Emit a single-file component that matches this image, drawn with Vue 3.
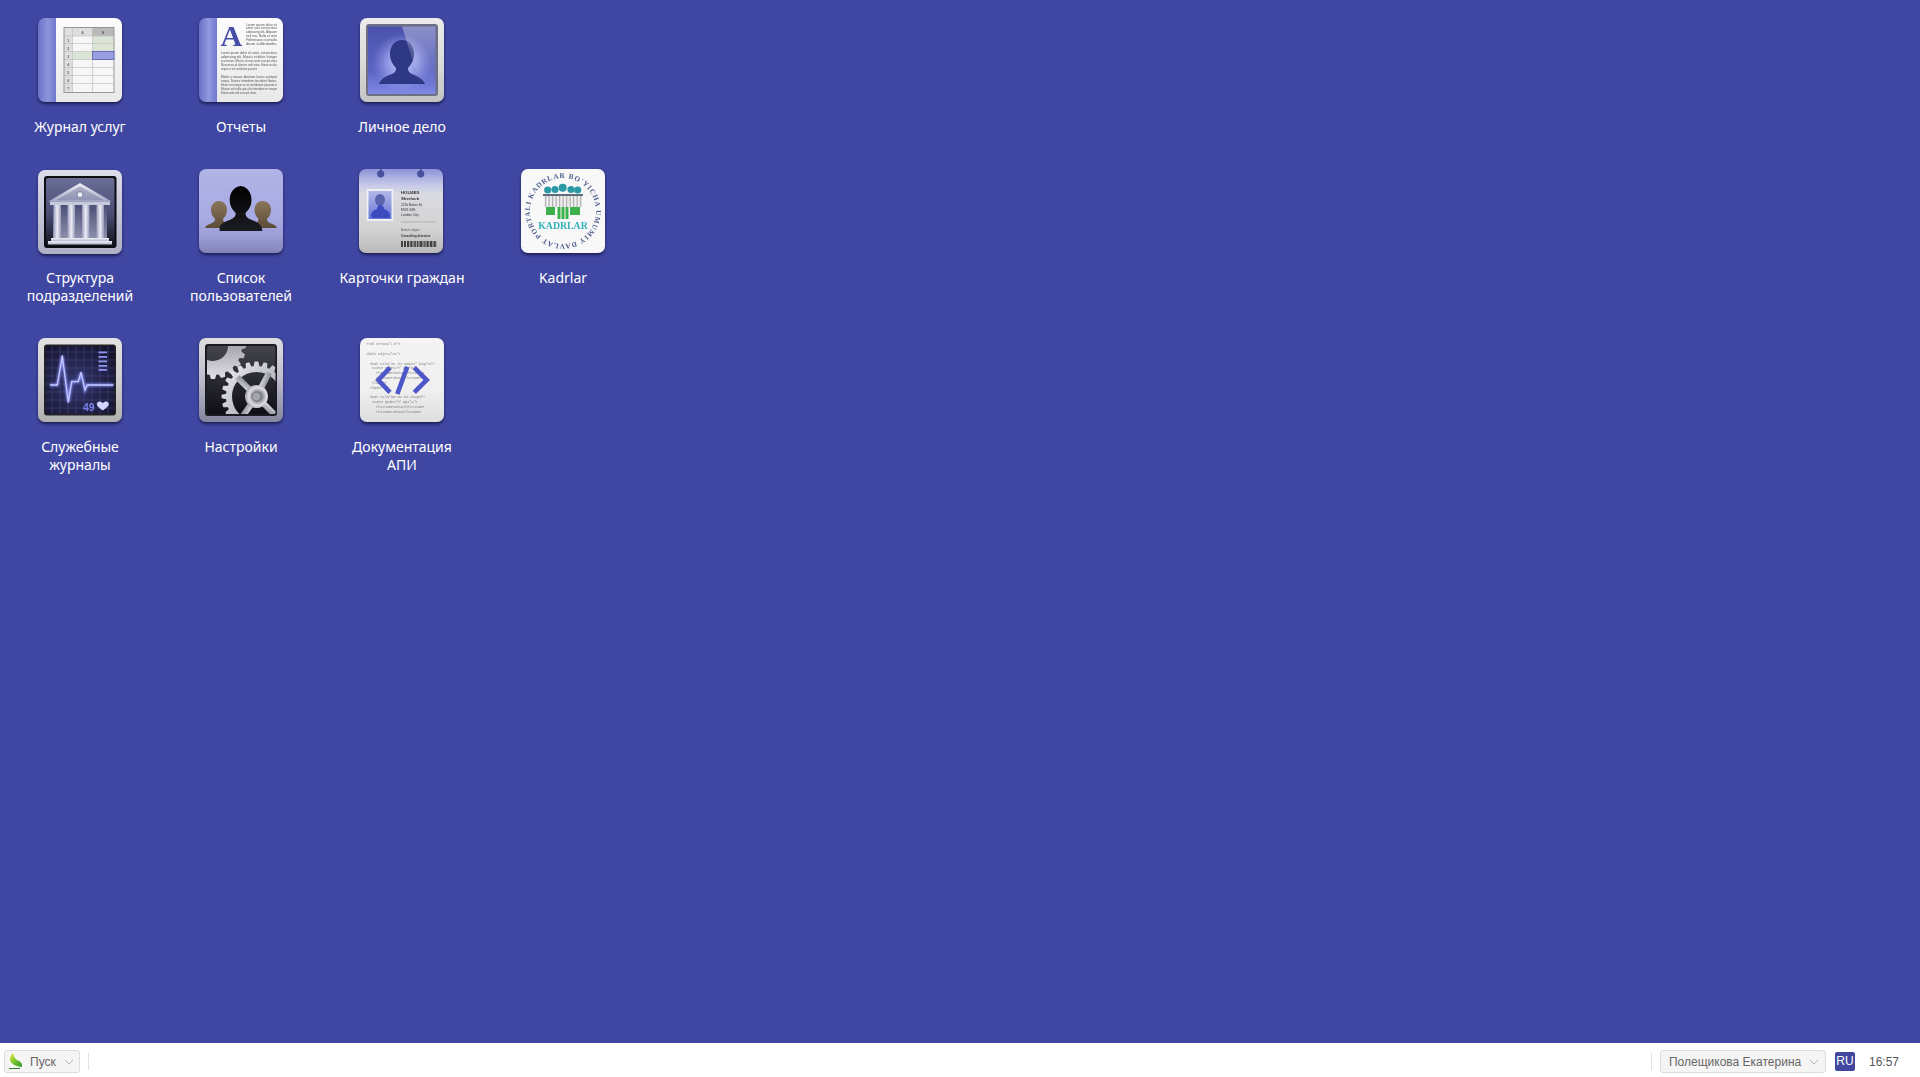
<script setup>
const rows = [
  [
    { icon: 'journal', label: 'Журнал услуг' },
    { icon: 'reports', label: 'Отчеты' },
    { icon: 'person', label: 'Личное дело' },
  ],
  [
    { icon: 'temple', label: 'Структура\nподразделений' },
    { icon: 'users', label: 'Список\nпользователей' },
    { icon: 'card', label: 'Карточки граждан' },
    { icon: 'kadrlar', label: 'Kadrlar' },
  ],
  [
    { icon: 'monitor', label: 'Служебные\nжурналы' },
    { icon: 'gears', label: 'Настройки' },
    { icon: 'api', label: 'Документация\nАПИ' },
  ],
]

const gridYs = [18, 25.5, 33.5, 41.5, 49.5, 57.5, 65.5]

const topLines = [
  ['Lorem ipsum dolor sit', 7.5], ['amet, vice consectetur', 11.4], ['adipiscing elit. Aliquam', 15.3],
  ['sed nisi. Nulla et ante', 19.2], ['Pellentesque ut convallis', 23.1], ['diam sollicitudin.', 27],
]
const bodyLines = [
  ['Lorem ipsum dolor sit amet, consectetur', 36], ['adipiscing elit. Mauris et dolor. Integer', 40.1],
  ['accumsan. Mauris sit eros ante suscipit vitae', 44.2], ['Maecenas id ultricies velit vitae. Etiam iaculis', 48.3],
  ['neque ac vel vestibulum posuere', 52.4],
  ['Morbi a mauris. Aenean luctus volutpat', 60], ['turpis. Donec interdum tincidunt libero.', 64.1],
  ['Etiam non neque ac mi vestibulum placerat in', 68.2], ['Mauris vel nulla quis dui interdum et neque', 72.3],
  ['Etiam ante elit suscipit vitae.', 76.4],
]
const codeLines = [
  ['<?xml version="1.0"?>', 7, 7.5], ['<bible subject="XML">', 16.5, 7.5],
  ['<book title="XML for newbies" lang="en">', 26.5, 11], ['<author gender="M" age="32">', 31, 13],
  ['<firstname>Michael</firstname>', 36, 17], ['<lastname>Johnson</lastname>', 41, 17],
  ['</author>', 45.5, 13], ['</book>', 50.5, 11],
  ['<book title="How XML has changed">', 60, 11], ['<author gender="M" age="41">', 64.5, 13],
  ['<firstname>Michael</firstname>', 69.5, 17], ['<lastname>Johnson</lastname>', 74.5, 17],
]

const barcode = [0, 1.2, 3, 4, 6.2, 7.2, 8.8, 10, 11.6, 13.4, 14.4, 16, 17.6, 19, 20, 21.6, 23.4, 24.6, 26, 27.4, 29, 30.2, 31.6, 33.2, 34.4]

const teal = [[26.7, 21, 3.6], [34, 20.5, 3.6], [41.7, 18.7, 4], [50, 20.5, 3.6], [56.7, 21, 3.6]]
const stripes = [24, 27.5, 31, 34.5, 38, 41.5, 45, 48.5, 52, 55.5, 59]
const greens = [[25, 9, 46], [36.5, 3, 50], [40.5, 3, 50], [44.5, 3, 50], [49, 10, 46]]

const grid = [14, 22, 30, 38, 46, 54, 62, 70]

function gear(cx, cy, R, r, teeth) {
  const step = (Math.PI * 2) / teeth
  const pts = []
  for (let i = 0; i < teeth; i++) {
    const a = i * step
    const p = (rad, ang) => (cx + rad * Math.cos(ang)).toFixed(2) + ' ' + (cy + rad * Math.sin(ang)).toFixed(2)
    pts.push(p(r, a - step * 0.36), p(R, a - step * 0.2), p(R, a + step * 0.2), p(r, a + step * 0.36))
  }
  return 'M' + pts.join('L') + 'Z'
}
function ring(cx, cy, R, r, teeth, hole) {
  const c = 'M' + (cx - hole) + ' ' + cy + 'a' + hole + ' ' + hole + ' 0 1 0 ' + hole * 2 + ' 0a' + hole + ' ' + hole + ' 0 1 0 ' + -hole * 2 + ' 0Z'
  return gear(cx, cy, R, r, teeth) + c
}
const bigGear = ring(57.5, 58.5, 35, 30.5, 24, 24.5)
const smallGear = ring(14, 8, 33, 29, 20, 15)
const spokes = [-135, -62, 45, 125]
</script>

<template>
  <div class="desktop">
    <main class="icons">
      <div v-for="(row, r) in rows" :key="r" class="row">
        <div v-for="it in row" :key="it.icon" class="item">
          <div class="tile" :class="'tile-' + it.icon">
            <svg v-if="it.icon === 'journal'" viewBox="0 0 84 84" class="art">
              <defs>
                <linearGradient id="j-page" x1="0" y1="0" x2="0" y2="1"><stop offset="0" stop-color="#fcfcfc" /><stop offset="1" stop-color="#e9e9e9" /></linearGradient>
                <linearGradient id="j-band" x1="0" y1="0" x2="1" y2="0"><stop offset="0" stop-color="#6a72c8" /><stop offset=".55" stop-color="#8d94da" /><stop offset="1" stop-color="#7078cf" /></linearGradient>
              </defs>
              <rect width="84" height="84" fill="url(#j-page)" />
              <rect width="18" height="84" fill="url(#j-band)" />
              <rect x="26" y="9.5" width="50" height="65" fill="#f6f6f6" />
              <rect x="26" y="9.5" width="50" height="8.5" fill="#dedede" />
              <rect x="26" y="9.5" width="8.5" height="65" fill="#dedede" />
              <rect x="54.5" y="9.5" width="21.5" height="8.5" fill="#b9b9b9" />
              <rect x="54.5" y="18" width="21.5" height="15.5" fill="#dbe4d5" />
              <rect x="34.5" y="33.5" width="20" height="8" fill="#dbe4d5" />
              <g stroke="#bcbcbc" stroke-width=".6">
                <line v-for="y in gridYs" :key="y" x1="26" x2="76" :y1="y" :y2="y" />
                <line x1="34.5" x2="34.5" y1="9.5" y2="74.5" />
                <line x1="54.5" x2="54.5" y1="9.5" y2="74.5" />
              </g>
              <rect x="26" y="9.5" width="50" height="65" fill="none" stroke="#8f8f8f" stroke-width=".9" />
              <rect x="54.5" y="33.5" width="21.5" height="8" fill="#98a0e2" stroke="#4a52b0" stroke-width=".7" />
              <g class="sheet" font-size="3.6" font-weight="700" fill="#666" text-anchor="middle">
                <text x="44.5" y="15.500">A</text><text x="65" y="15.500">B</text>
                <text v-for="n in 7" :key="n" x="30.2" :y="15.800 + n * 8">{{ n }}</text>
              </g>
            </svg>

            <svg v-else-if="it.icon === 'reports'" viewBox="0 0 84 84" class="art">
              <defs>
                <linearGradient id="r-page" x1="0" y1="0" x2="0" y2="1"><stop offset="0" stop-color="#fcfcfc" /><stop offset="1" stop-color="#e8e8e8" /></linearGradient>
                <linearGradient id="r-band" x1="0" y1="0" x2="1" y2="0"><stop offset="0" stop-color="#6a72c8" /><stop offset=".55" stop-color="#9299de" /><stop offset="1" stop-color="#7078cf" /></linearGradient>
              </defs>
              <rect width="84" height="84" fill="url(#r-page)" />
              <rect width="18" height="84" fill="url(#r-band)" />
              <text x="21.500" y="28" class="serif" font-size="30" fill="#454da6">A</text>
              <g class="sheet" font-size="2.700" fill="#555">
                <text v-for="l in topLines" :key="l[1]" x="47" :y="l[1]" textLength="31" lengthAdjust="spacingAndGlyphs">{{ l[0] }}</text>
                <text v-for="l in bodyLines" :key="l[1]" x="22" :y="l[1]" :textLength="l[0].length < 32 ? 36 : 56" lengthAdjust="spacingAndGlyphs">{{ l[0] }}</text>
              </g>
            </svg>

            <svg v-else-if="it.icon === 'person'" viewBox="0 0 84 84" class="art">
              <defs>
                <linearGradient id="p-frame" x1="0" y1="0" x2="0" y2="1"><stop offset="0" stop-color="#ebebeb" /><stop offset=".5" stop-color="#dcdcdc" /><stop offset="1" stop-color="#c4c4c4" /></linearGradient>
                <linearGradient id="p-screen" x1="0" y1="0" x2="0" y2="1"><stop offset="0" stop-color="#4b52ac" /><stop offset=".65" stop-color="#5c64c2" /><stop offset="1" stop-color="#7f89e6" /></linearGradient>
                <radialGradient id="p-halo" cx=".5" cy=".5" r=".5"><stop offset="0" stop-color="#d6daff" stop-opacity=".95" /><stop offset=".55" stop-color="#aab1f6" stop-opacity=".6" /><stop offset="1" stop-color="#8a92e6" stop-opacity="0" /></radialGradient>
                <linearGradient id="p-glare" x1="0" y1="0" x2="0" y2="1"><stop offset="0" stop-color="#fff" stop-opacity=".36" /><stop offset=".45" stop-color="#fff" stop-opacity=".16" /><stop offset=".9" stop-color="#fff" stop-opacity="0" /></linearGradient>
              </defs>
              <rect width="84" height="84" fill="url(#p-frame)" />
              <rect x="6" y="6" width="72" height="72" rx="3" fill="#6d6f84" />
              <rect x="8" y="8.500" width="67.500" height="67.500" fill="url(#p-screen)" />
              <ellipse cx="42" cy="45" rx="30" ry="30" fill="url(#p-halo)" />
              <path d="M42 22c-7 0-12 6-12 14 0 6 3 11 6 14 0 3-1 5-4 6-5 2-11 4-13 10h46c-2-6-9-8-13-10-3-1-4-3-4-6 3-3 6-8 6-14 0-8-5-14-12-14Z" fill="#2f3884" />
              <path d="M42 8.500H75.500V72H62Z" fill="url(#p-glare)" />
            </svg>

            <svg v-else-if="it.icon === 'temple'" viewBox="0 0 84 84" class="art">
              <defs>
                <linearGradient id="t-frame" x1="0" y1="0" x2="0" y2="1"><stop offset="0" stop-color="#dcdcea" /><stop offset="1" stop-color="#aeb0c6" /></linearGradient>
                <linearGradient id="t-screen" x1="0" y1="0" x2="0" y2="1"><stop offset="0" stop-color="#6a6e96" /><stop offset=".55" stop-color="#484b72" /><stop offset="1" stop-color="#14141e" /></linearGradient>
                <linearGradient id="t-roof" x1="0" y1="0" x2="0" y2="1"><stop offset="0" stop-color="#f0f0f6" /><stop offset="1" stop-color="#a6a8c6" /></linearGradient>
                <linearGradient id="t-col" x1="0" y1="0" x2="1" y2="0"><stop offset="0" stop-color="#9a9cbc" /><stop offset=".5" stop-color="#eeeef6" /><stop offset="1" stop-color="#9698b8" /></linearGradient>
                <linearGradient id="t-back" x1="0" y1="0" x2="0" y2="1"><stop offset="0" stop-color="#4d5076" /><stop offset="1" stop-color="#8c8eac" /></linearGradient>
                <linearGradient id="t-base" x1="0" y1="0" x2="0" y2="1"><stop offset="0" stop-color="#f2f2f8" /><stop offset="1" stop-color="#b4b6cc" /></linearGradient>
              </defs>
              <rect width="84" height="84" fill="url(#t-frame)" />
              <rect x="6" y="6" width="72.500" height="72" rx="3" fill="#0c0c12" />
              <rect x="8" y="8" width="68.500" height="68" rx="2" fill="url(#t-screen)" />
              <path d="M42 13 73.700 31.500H10.300Z" fill="url(#t-roof)" />
              <path d="M42 16.500 66 30.300H18Z" fill="#7f82a8" opacity=".55" />
              <circle cx="42" cy="24.700" r="3" fill="#eeeef6" stroke="#6d7096" stroke-width=".8" />
              <rect x="12" y="31.500" width="60" height="3.500" fill="#c6c8dc" />
              <rect x="15" y="35" width="54" height="33" fill="url(#t-back)" />
              <rect v-for="x in [15.500, 29.500, 44, 58.500]" :key="x" :x="x" y="35" width="7.500" height="33" fill="url(#t-col)" />
              <rect x="13" y="68" width="58" height="3" fill="url(#t-base)" />
              <rect x="10" y="71" width="64" height="3.500" fill="url(#t-base)" />
            </svg>

            <svg v-else-if="it.icon === 'users'" viewBox="0 0 84 84" class="art">
              <defs>
                <linearGradient id="u-bg" x1="0" y1="0" x2="0" y2="1"><stop offset="0" stop-color="#b1b4e6" /><stop offset=".62" stop-color="#a7aae2" /><stop offset=".78" stop-color="#9da0d8" /><stop offset="1" stop-color="#8385b8" /></linearGradient>
                <linearGradient id="u-side" x1="0" y1="0" x2="0" y2="1"><stop offset="0" stop-color="#8a765a" /><stop offset="1" stop-color="#5c4c36" /></linearGradient>
                <linearGradient id="u-main" x1="0" y1="0" x2="0" y2="1"><stop offset="0" stop-color="#000" /><stop offset="1" stop-color="#1c1c24" /></linearGradient>
              </defs>
              <rect width="84" height="84" fill="url(#u-bg)" />
              <path d="M20 32c-5 0-8 4-8 9 0 4 2 7 4 9 0 2-1 3-3 4-2 1-6 2-7 5h28c-1-3-5-4-7-5-2-1-3-2-3-4 2-2 4-5 4-9 0-5-3-9-8-9Z" fill="url(#u-side)" />
              <path d="M63.500 32c-5 0-8 4-8 9 0 4 2 7 4 9 0 2-1 3-3 4-2 1-6 2-7 5h28.500c-1-3-5-4-7-5-2-1-3-2-3-4 2-2 4-5 4-9 0-5-3-9-8.500-9Z" fill="url(#u-side)" />
              <path d="M42.700 17c-7 0-12 6-12 14 0 6 3 10 6 13 0 3-1 4-4 6-4 2-10 3-12 8l-.2 4h43l-1-4c-2-5-8-6-12-8-3-2-4-3-4-6 3-3 6-7 6-13 0-8-5-14-11.800-14Z" fill="url(#u-main)" />
            </svg>

            <svg v-else-if="it.icon === 'card'" viewBox="0 0 84 84" class="art">
              <defs>
                <linearGradient id="c-bg" x1="0" y1="0" x2="0" y2="1"><stop offset="0" stop-color="#8c93d8" /><stop offset=".2" stop-color="#c8cbe8" /><stop offset=".3" stop-color="#dadae2" /><stop offset=".7" stop-color="#d4d4d4" /><stop offset="1" stop-color="#b9b9b9" /></linearGradient>
                <linearGradient id="c-photo" x1="0" y1="0" x2="0" y2="1"><stop offset="0" stop-color="#b4b9e8" /><stop offset="1" stop-color="#6a76d8" /></linearGradient>
              </defs>
              <rect width="84" height="84" fill="url(#c-bg)" />
              <rect x="21" y="0" width="1.400" height="3" fill="#43488f" />
              <rect x="61" y="0" width="1.400" height="3" fill="#43488f" />
              <circle cx="21.700" cy="4.800" r="3.600" fill="#4a4f9c" />
              <circle cx="61.700" cy="4.800" r="3.600" fill="#4a4f9c" />
              <rect x="7.700" y="20" width="26.500" height="32" fill="#f0f0f2" />
              <rect x="9.500" y="22" width="23" height="28" fill="url(#c-photo)" />
              <ellipse cx="21" cy="31" rx="5" ry="6" fill="#5a64ae" />
              <path d="M21 36c-2 0-3 2-3 4-3 1-6 3-6 7l1 2h17l1-2c0-4-3-6-6-7 0-2-1-4-4-4Z" fill="#3c4cc0" />
              <g class="sheet" fill="#333">
                <text x="42" y="24.500" font-size="4.300" font-weight="700">HOLMES</text>
                <text x="42" y="30.500" font-size="4.300" font-weight="700">Sherlock</text>
                <text x="42" y="37" font-size="3.300">221b Baker St.</text>
                <text x="42" y="41.500" font-size="3.300">NW1 6XE</text>
                <text x="42" y="46.500" font-size="3.300">London City</text>
                <text x="42" y="62" font-size="3" fill="#555">British subject</text>
                <text x="42" y="68" font-size="3" font-weight="700">Consulting detective</text>
              </g>
              <rect x="42" y="52.500" width="35" height=".8" fill="#aaa" />
              <rect v-for="x in barcode" :key="x" :x="42 + x" y="72" width=".8" height="6" fill="#222" />
            </svg>

            <svg v-else-if="it.icon === 'kadrlar'" viewBox="0 0 84 84" class="art">
              <defs>
                <path id="k-circle" d="M9 42A33 33 0 1 1 75 42A33 33 0 1 1 9 42" />
              </defs>
              <rect width="84" height="84" fill="#f8f8f8" />
              <g transform="rotate(21 42 42)">
                <text class="serif" font-size="7.200" fill="#50608e" letter-spacing=".85">
                  <textPath href="#k-circle">KADRLAR BO'YICHA UMUMIY DAVLAT PORTALI</textPath>
                </text>
              </g>
              <circle v-for="t in teal" :key="t[0]" :cx="t[0]" :cy="t[1]" :r="t[2]" fill="#2c9aa6" />
              <rect x="22" y="25" width="40" height="2" fill="#5d6d7d" />
              <rect x="23" y="27" width="38" height="11" fill="#ececec" />
              <rect v-for="x in stripes" :key="x" :x="x" y="27" width="1.200" height="11" fill="#b4b4b4" />
              <rect v-for="g in greens" :key="g[0]" :x="g[0]" y="38" :width="g[1]" :height="g[2] - 38" fill="#3cb04a" />
              <text x="42" y="60" class="serif" font-size="9.800" fill="#34b0b8" text-anchor="middle">KADRLAR</text>
            </svg>

            <svg v-else-if="it.icon === 'monitor'" viewBox="0 0 84 84" class="art">
              <defs>
                <linearGradient id="m-frame" x1="0" y1="0" x2="0" y2="1"><stop offset="0" stop-color="#e2e2e2" /><stop offset=".5" stop-color="#cfcfcf" /><stop offset="1" stop-color="#b0b0b0" /></linearGradient>
                <radialGradient id="m-screen" cx=".45" cy=".55" r=".7"><stop offset="0" stop-color="#34366e" /><stop offset="1" stop-color="#14142c" /></radialGradient>
                <filter id="m-glow" x="-20%" y="-20%" width="140%" height="140%"><feGaussianBlur stdDeviation="1.200" /></filter>
              </defs>
              <rect width="84" height="84" fill="url(#m-frame)" />
              <rect x="6" y="6.500" width="72" height="71" rx="3" fill="#222" />
              <rect x="7.500" y="8" width="69" height="68" rx="2" fill="url(#m-screen)" />
              <g stroke="#43457f" stroke-width=".6">
                <line v-for="g in grid" :key="g" :x1="g" :x2="g" y1="8" y2="76" />
                <line v-for="g in grid" :key="'h' + g" x1="7.500" x2="76.500" :y1="g" :y2="g" />
              </g>
              <polyline points="12,47 19.300,47 24.300,17.700 30.300,64.300 33.700,43.700 40.300,43.700 43,34.300 47,52 49.300,47 75.300,47" fill="none" stroke="#8088f0" stroke-width="2.800" filter="url(#m-glow)" />
              <polyline points="12,47 19.300,47 24.300,17.700 30.300,64.300 33.700,43.700 40.300,43.700 43,34.300 47,52 49.300,47 75.300,47" fill="none" stroke="#c4c8ff" stroke-width="1.300" />
              <rect v-for="y in [13.500, 18, 22.500, 27, 31]" :key="y" x="60.500" :y="y" width="8.500" height="1.800" fill="#8f95f0" />
              <text x="45" y="72.500" class="sheet" font-size="10.500" font-weight="700" fill="#7b82ea">49</text>
              <path d="M64.800 72.500c-5-3.500-6-5-6-6.500 0-2.800 4-3.500 6-.8 2-2.700 6-2 6 .8 0 1.500-1 3-6 6.500Z" fill="#d2d5ff" />
            </svg>

            <svg v-else-if="it.icon === 'gears'" viewBox="0 0 84 84" class="art">
              <defs>
                <linearGradient id="g-frame" x1="0" y1="0" x2="0" y2="1"><stop offset="0" stop-color="#dededf" /><stop offset=".5" stop-color="#bcbccc" /><stop offset="1" stop-color="#84849e" /></linearGradient>
                <linearGradient id="g-screen" x1="0" y1="0" x2="0" y2="1"><stop offset="0" stop-color="#44444e" /><stop offset="1" stop-color="#0e0e14" /></linearGradient>
                <linearGradient id="g-metal" x1="0" y1="0" x2="1" y2="1"><stop offset="0" stop-color="#f0f0f4" /><stop offset=".55" stop-color="#b4b4be" /><stop offset="1" stop-color="#8a8a96" /></linearGradient>
                <linearGradient id="g-metal2" x1="0" y1="0" x2="0" y2="1"><stop offset="0" stop-color="#6c6c74" /><stop offset="1" stop-color="#e0e0e6" /></linearGradient>
                <radialGradient id="g-hub" cx=".55" cy=".5" r=".6"><stop offset="0" stop-color="#c4c4cc" /><stop offset=".3" stop-color="#808088" /><stop offset=".65" stop-color="#dedee4" /><stop offset="1" stop-color="#8a8a92" /></radialGradient>
                <clipPath id="g-clip"><rect x="8" y="8" width="68.500" height="68" rx="2" /></clipPath>
              </defs>
              <rect width="84" height="84" fill="url(#g-frame)" />
              <rect x="6" y="6" width="72" height="72" rx="3" fill="#1a1a20" />
              <g clip-path="url(#g-clip)">
                <rect x="8" y="8" width="68.500" height="68" fill="url(#g-screen)" />
                <path :d="smallGear" fill="url(#g-metal2)" fill-rule="evenodd" />
                <path :d="bigGear" fill="url(#g-metal)" fill-rule="evenodd" />
                <g fill="url(#g-metal)">
                  <rect v-for="a in spokes" :key="a" x="57.500" y="55.500" width="27" height="6" :transform="'rotate(' + a + ' 57.500 58.500)'" />
                </g>
                <circle cx="57.500" cy="58.500" r="11.500" fill="url(#g-hub)" />
                <circle cx="57.500" cy="58.500" r="4.500" fill="#a4a4ac" stroke="#6c6c74" stroke-width=".8" />
              </g>
            </svg>

            <svg v-else-if="it.icon === 'api'" viewBox="0 0 84 84" class="art">
              <defs>
                <linearGradient id="a-bg" x1="0" y1="0" x2="0" y2="1"><stop offset="0" stop-color="#f4f4f4" /><stop offset=".6" stop-color="#f0f0f0" /><stop offset="1" stop-color="#dedede" /></linearGradient>
              </defs>
              <rect width="84" height="84" fill="url(#a-bg)" />
              <g class="mono" font-size="2.700" fill="#777">
                <text v-for="c in codeLines" :key="c[1]" :x="c[2] - 1" :y="c[1]">{{ c[0] }}</text>
              </g>
              <g fill="none" stroke="#4d57c8" stroke-width="4.600">
                <polyline points="30,29.700 18.300,42 30,54.300" />
                <line x1="47.300" y1="28.700" x2="37.300" y2="56" />
                <polyline points="54.300,29.700 66.700,42 54.300,54.300" />
              </g>
            </svg>
          </div>
          <div class="label">{{ it.label }}</div>
        </div>
      </div>
    </main>

    <footer class="taskbar">
      <button class="tbtn start">
        <svg class="leaf" viewBox="0 0 16 18" width="16" height="18">
          <defs>
            <linearGradient id="leaf-g" x1="0" y1="0" x2="1" y2="1"><stop offset="0" stop-color="#e2ea3c" /><stop offset=".55" stop-color="#6cc02c" /><stop offset="1" stop-color="#2f9a2a" /></linearGradient>
          </defs>
          <path d="M5 0C2 3 1 6 3 9c1.500 2.500 5 4.500 11 5 .5-3-1-5.500-4-6.500C7.500 6.500 6 4 5 0Z" fill="url(#leaf-g)" />
          <path d="M1 15.500h11" stroke="#3c7a34" stroke-width="1" />
        </svg>
        <span>Пуск</span>
        <svg class="chev" viewBox="0 0 10 6" width="10" height="6"><path d="M1 1l4 4 4-4" fill="none" stroke="#b4b4b4" /></svg>
      </button>
      <i class="sep" />
      <div class="spacer" />
      <i class="sep" />
      <button class="tbtn user">
        <span>Полещикова Екатерина</span>
        <svg class="chev" viewBox="0 0 10 6" width="10" height="6"><path d="M1 1l4 4 4-4" fill="none" stroke="#b4b4b4" /></svg>
      </button>
      <span class="lang">RU</span>
      <span class="clock">16:57</span>
    </footer>
  </div>
</template>

<style scoped>
.desktop {
  height: 1077px;
  display: flex;
  flex-direction: column;
  background: #4047a2;
  overflow: hidden;
  font-family: "Noto Sans", "Liberation Sans", sans-serif;
}
.icons {
  flex: 1;
  padding-top: 18px;
}
.row {
  display: flex;
  gap: 1px;
}
.item {
  width: 160px;
  padding-bottom: 33px;
  display: flex;
  flex-direction: column;
  align-items: center;
}
.tile {
  width: 84px;
  height: 84px;
  border-radius: 7px;
  overflow: hidden;
  box-shadow: 0 2px 3px rgba(18, 18, 60, 0.75);
}
.tile-temple {
  transform: translateY(1px);
}
.tile-card {
  transform: translateX(-1px);
}
.art {
  display: block;
  width: 84px;
  height: 84px;
  filter: blur(0.25px);
}
.label {
  margin-top: 16px;
  color: #fff;
  font-size: 14px;
  line-height: 18px;
  text-align: center;
  white-space: pre-line;
}
.sheet {
  font-family: "Liberation Sans", sans-serif;
}
.serif {
  font-family: "Liberation Serif", serif;
  font-weight: 700;
}
.mono {
  font-family: "Liberation Mono", monospace;
}
.taskbar {
  height: 34px;
  flex: none;
  display: flex;
  align-items: center;
  background: #fff;
  padding: 3px 21px 0 4px;
  box-sizing: border-box;
  font-family: "Liberation Sans", sans-serif;
  font-size: 12px;
  color: #666;
}
.tbtn {
  height: 23px;
  box-sizing: border-box;
  display: flex;
  align-items: center;
  background: #f5f5f5;
  border: 1px solid #dcdcdc;
  border-radius: 3px;
  font: inherit;
  color: inherit;
  padding: 0;
}
.start {
  width: 76px;
  padding-left: 3px;
}
.leaf {
  margin-right: 6px;
}
.chev {
  margin-left: 8px;
}
.sep {
  width: 1px;
  height: 17px;
  background: #e2e2e2;
  margin-left: 8px;
}
.spacer {
  flex: 1;
}
.user {
  width: 166px;
  margin-left: 8px;
  padding-left: 8px;
}
.lang {
  width: 20px;
  height: 19px;
  margin-left: 9px;
  border-radius: 2px;
  background: #41479f;
  color: #fff;
  text-align: center;
  line-height: 19px;
}
.clock {
  margin-left: 14px;
  color: #555;
}
</style>

<style>
html, body {
  margin: 0;
  background: #4047a2;
}
</style>
